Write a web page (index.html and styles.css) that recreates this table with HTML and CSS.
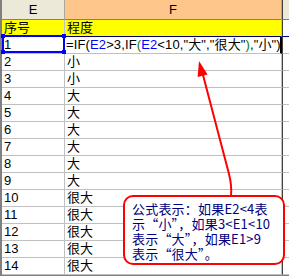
FILE: index.html
```html
<!DOCTYPE html>
<html>
<head>
<meta charset="utf-8">
<link rel="stylesheet" href="styles.css">
</head>
<body>
<div class="screen">
  <div class="sheet">
    <div class="row head"><div class="c e">E</div><div class="c f">F</div><div class="c g"></div></div>
    <div class="row yellow"><div class="c e">序号</div><div class="c f">程度</div><div class="c g"></div></div>
    <div class="row"><div class="c e">1</div><div class="c f formula">=IF(<span class="ref">E2</span>&gt;3,IF<span class="par">(</span><span class="ref">E2</span>&lt;10,"大","很大"<span class="par">)</span>,"小")</div><div class="c g"></div></div>
    <div class="row"><div class="c e">2</div><div class="c f">小</div><div class="c g"></div></div>
    <div class="row"><div class="c e">3</div><div class="c f">小</div><div class="c g"></div></div>
    <div class="row"><div class="c e">4</div><div class="c f">大</div><div class="c g"></div></div>
    <div class="row"><div class="c e">5</div><div class="c f">大</div><div class="c g"></div></div>
    <div class="row"><div class="c e">6</div><div class="c f">大</div><div class="c g"></div></div>
    <div class="row"><div class="c e">7</div><div class="c f">大</div><div class="c g"></div></div>
    <div class="row"><div class="c e">8</div><div class="c f">大</div><div class="c g"></div></div>
    <div class="row"><div class="c e">9</div><div class="c f">大</div><div class="c g"></div></div>
    <div class="row"><div class="c e">10</div><div class="c f">很大</div><div class="c g"></div></div>
    <div class="row"><div class="c e">11</div><div class="c f">很大</div><div class="c g"></div></div>
    <div class="row"><div class="c e">12</div><div class="c f">很大</div><div class="c g"></div></div>
    <div class="row"><div class="c e">13</div><div class="c f">很大</div><div class="c g"></div></div>
    <div class="row"><div class="c e">14</div><div class="c f">很大</div><div class="c g"></div></div>
  </div>
  <div class="sel"><i class="h tl"></i><i class="h tr"></i><i class="h bl"></i><i class="h br"></i></div>
  <svg class="arrow" width="289" height="276" viewBox="0 0 289 276">
    <path d="M203 75 L229 174 Q232 186 231 196" fill="none" stroke="#ff0000" stroke-width="2"/>
    <polygon points="199,61 197.6,77 207.6,74.5" fill="#ff0000"/>
  </svg>
  <div class="callout"><div class="ln">公式表示：如果E2&lt;4表</div><div class="ln">示“小”，如果3&lt;E1&lt;10</div><div class="ln">表示“大”，如果E1&gt;9</div><div class="ln">表示“很大”。</div></div>
</div>
</body>
</html>
```
FILE: styles.css
```css
html, body { margin: 0; padding: 0; background: #ffffff; }
.screen {
  position: relative;
  width: 289px;
  height: 276px;
  overflow: hidden;
  background: #808080;
  font-family: "Liberation Sans", "Noto Sans CJK SC", sans-serif;
  font-size: 13px;
  color: #000;
}
.sheet {
  display: flex;
  flex-direction: column;
  border-left: 2px solid #808080;
  background: #ffffff;
}
.row {
  display: grid;
  grid-template-columns: 63px 217px 1fr;
  height: 17px;
}
.c {
  border-right: 1px solid #c0c0c0;
  border-bottom: 1px solid #c0c0c0;
  padding-left: 2px;
  line-height: 16px;
  white-space: nowrap;
  overflow: hidden;
}
.c.g { border-right: none; border-left: 1px solid #404040; background: #ffffff; }
.head { height: 20px; }
.head .c {
  line-height: 19px;
  text-align: center;
  padding: 0;
  border-bottom-color: #808080;
  border-right-color: #aca899;
}
.head .e { background: #ece9d8; }
.head .f { background: #ffc68c; }
.head .g { background: #ece9d8; }
.yellow .e, .yellow .f { background: #ffff00; }
.yellow .c { border-bottom-color: #000080; }
.formula {
  border-right: 2px solid #000000;
  padding-left: 1px;
  letter-spacing: 0.12px;
}
.ref { color: #0000ff; }
.par { color: #008000; }
.sel {
  position: absolute;
  left: 2px;
  top: 35px;
  width: 59px;
  height: 14px;
  border: 2px solid #0000ff;
}
.sel .h {
  position: absolute;
  width: 4px;
  height: 4px;
  background: #0000ff;
}
.sel .tl { left: -3px; top: -3px; }
.sel .tr { right: -3px; top: -3px; }
.sel .bl { left: -3px; bottom: -3px; }
.sel .br { right: -3px; bottom: -3px; }
.arrow { position: absolute; left: 0; top: 0; }
.callout {
  position: absolute;
  left: 123px;
  top: 195px;
  width: 148px;
  height: 60px;
  padding: 4px 3px 2px 7px;
  border: 2px solid #ff0000;
  border-radius: 10px;
  background: #ffffff;
  color: #000080;
  font-family: "Noto Sans CJK SC", sans-serif;
  font-size: 13px;
  letter-spacing: 0.2px;
  white-space: nowrap;
  display: flex;
  flex-direction: column;
}
.callout .ln {
  height: 15px;
  line-height: 15px;
}
```
